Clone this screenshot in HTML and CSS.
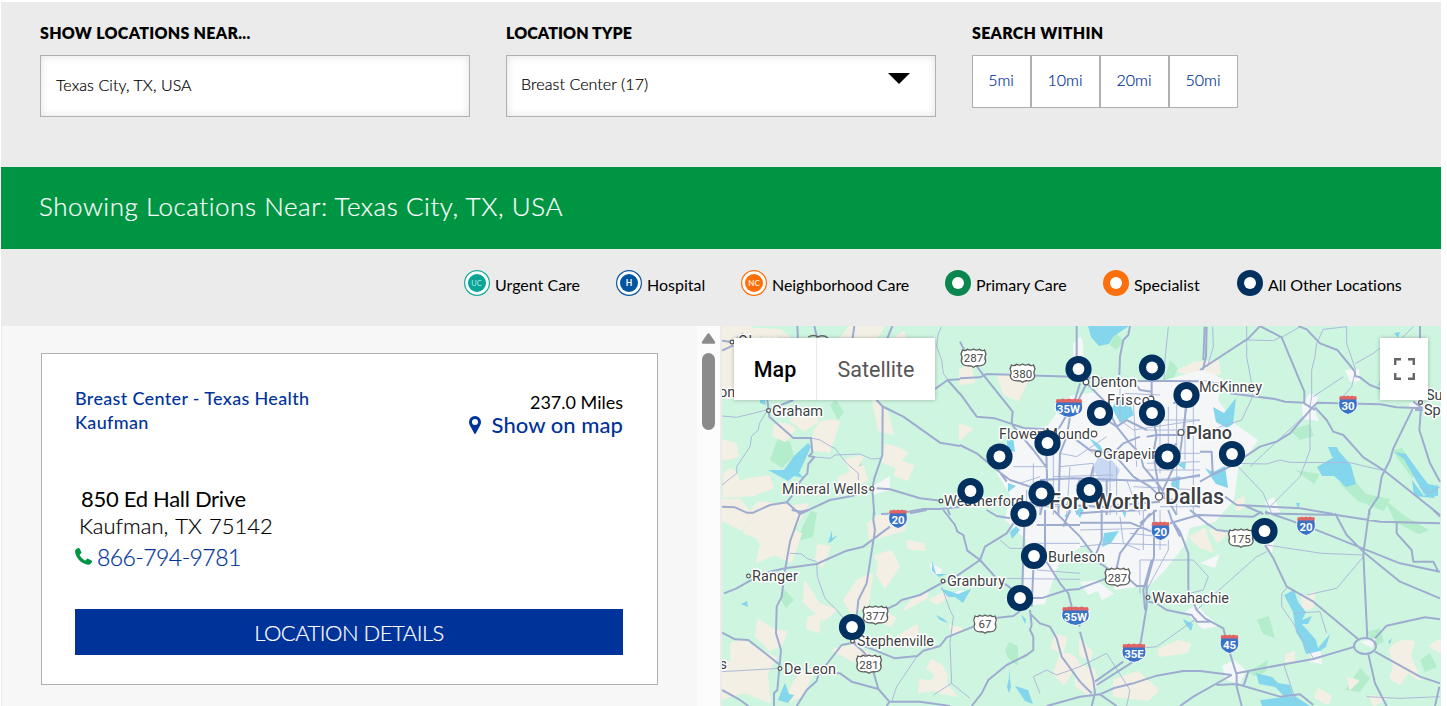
FILE: index.html
```html
<!DOCTYPE html>
<html lang="en">
<head>
<meta charset="utf-8">
<title>Locations</title>
<link rel="stylesheet" href="styles.css">
</head>
<body>
<main class="page">
  <form class="filters">
    <div class="field">
      <label class="label label-near">SHOW LOCATIONS NEAR...</label>
      <div class="input near"><span>Texas City, TX, USA</span></div>
    </div>
    <div class="field">
      <label class="label label-type">LOCATION TYPE</label>
      <div class="input select"><span>Breast Center (17)</span>
        <svg class="caret" viewBox="0 0 22 11"><path d="M0 0H22L11 11Z"/></svg>
      </div>
    </div>
    <div class="field">
      <label class="label label-within">SEARCH WITHIN</label>
      <div class="radius"><a>5mi</a><a>10mi</a><a>20mi</a><a>50mi</a></div>
    </div>
  </form>
  <h1 class="banner"><span>Showing Locations Near: Texas City, TX, USA</span></h1>
  <ul class="legend">
    <li><svg viewBox="0 0 26 26"><circle cx="13" cy="13" r="12.4" fill="#fff" stroke="#16a99d" stroke-width="1.2"/><circle cx="13" cy="13" r="9" fill="#08a598"/><text x="12.4" y="15.6" fill="#b9e9e3" font-size="7.5" text-anchor="middle">UC</text></svg><span>Urgent Care</span></li>
    <li><svg viewBox="0 0 26 26"><circle cx="13" cy="13" r="12.4" fill="#fff" stroke="#0b559f" stroke-width="1.2"/><circle cx="13" cy="13" r="9" fill="#0055a0"/><text x="13" y="16" fill="#fff" font-size="8.5" font-weight="700" text-anchor="middle">H</text></svg><span>Hospital</span></li>
    <li><svg viewBox="0 0 26 26"><circle cx="13" cy="13" r="12.4" fill="#fff" stroke="#ff6f08" stroke-width="1.2"/><circle cx="13" cy="13" r="9" fill="#ff6f08"/><text x="13" y="15.8" fill="#ffe9d8" font-size="8" font-weight="700" text-anchor="middle">NC</text></svg><span>Neighborhood Care</span></li>
    <li><svg viewBox="0 0 26 26"><circle cx="13" cy="13" r="13" fill="#0a8650"/><circle cx="13" cy="13" r="6" fill="#fff"/></svg><span>Primary Care</span></li>
    <li><svg viewBox="0 0 26 26"><circle cx="13" cy="13" r="13" fill="#fb700c"/><circle cx="13" cy="13" r="6" fill="#fff"/></svg><span>Specialist</span></li>
    <li><svg viewBox="0 0 26 26"><circle cx="13" cy="13" r="13" fill="#02315f"/><circle cx="13" cy="13" r="6" fill="#fff"/></svg><span>All Other Locations</span></li>
  </ul>
  <section class="results">
    <div class="list">
      <article class="card">
        <div class="card-head">
          <h2 class="name">Breast Center - Texas Health<br>Kaufman</h2>
          <div class="distance">
            <div class="miles">237.0 Miles</div>
            <a class="show"><svg viewBox="0 0 12 18"><path fill-rule="evenodd" d="M6 0a6 6 0 0 1 6 6c0 2-1 3.600-1.800 5L6.700 17.500q-.7 1-1.400 0L1.800 11C1 9.600 0 8 0 6a6 6 0 0 1 6-6Zm0 3a3 3 0 1 0 0 6a3 3 0 0 0 0-6Z"/></svg><span>Show on map</span></a>
          </div>
        </div>
        <div class="street">850 Ed Hall Drive</div>
        <div class="city">Kaufman, TX 75142</div>
        <a class="phone"><svg viewBox="0 0 17 17"><path d="M0 3.600C0 1.500 2 .2 3.800 0q.5 0 .8.600L6.400 4.300q.2.600-.3 1L4.800 6.600q-.3.400 0 .9 1.800 3.200 5 4.900.5.200.9-.2l1.300-1.400q.5-.4 1.100-.1l3.400 1.800q.6.300.5 1C16.800 15.400 15 17 12.800 16.800C6 15.500 1 10.500 0 3.600Z"/></svg><span>866-794-9781</span></a>
        <a class="details"><span>LOCATION DETAILS</span></a>
      </article>
    </div>
    <div class="scroll"><svg viewBox="0 0 14 11"><path d="M6 .7q1-1 2 0l5.500 8q.8 1.800-1 2H1.500q-1.800-.2-1-2Z"/></svg><i></i></div>
    <div class="map">
      <svg class="tiles" viewBox="722 326 719 380">
        <defs>
          <g id="pin"><circle r="13.100" fill="#02315f"/><circle r="5.900" fill="#fff"/></g>
          <g id="us"><path d="M-11-8q3 1.500 5-.8Q-3-7 0-9 3-7 6-8.800q2 2.300 5 .8l1.500 4q-2 3.500-.3 7-.5 5-7.200 4.800Q2 7.500 0 9.200-2 7.500-5 7.800-11.700 8-12.200 3q1.700-3.500-.3-7Z" fill="#fff" stroke="#5e5e5e" stroke-width="1.300"/></g>
          <g id="is"><path d="M-8.500-6.500q-2 8 1 11.500Q-4 8.500 0 9.500 4 8.500 7.500 5q3-3.500 1-11.500Z" fill="#3973c8" stroke="#fff" stroke-width=".8"/><path d="M-9-5.500-8.200-9q2 .9 4-.5Q-2-8 0-9.500 2-8 4.200-9.500q2 1.400 4 .5L9-5.500Z" fill="#e06464"/></g>
        </defs>
        <rect x="722" y="326" width="719" height="380" fill="#cef5e0"/>
        <g class="woods">
          <path d="M770 460l8-22 12 4 4 14-12 12ZM838 420l-8-15 6-5 8 12ZM852 462l6-4 5 9-6 5ZM803 525l8-14 6 2-4 24-15 4ZM781 600l2-12 11 12-8 8ZM1170 360l8 8-6 14h-8ZM1290 430l20-6 4 12-14 4ZM1392 450l10-2 16 24-6 6ZM1257 620l12-4 6 22-12-4ZM1345 690l15-22 10 10-10 14ZM1368 632l12-4 4 14-10 4ZM1295 470l25 4-6 10ZM1340 484l14-4 12 14 24 5-6 12-26-10ZM1385 500l20 16 24 14-10 4-24-12ZM1140 530l12-10 4 14-12 9ZM1060 540l15-10-4 16-12 4ZM1005 650l4-8 9 4v20l-10-8ZM1420 660l10-7 7 14-12 5ZM1110 345l6-13 8 10-8 8ZM1248 672l20-12-2 12-12 4Z"/>
        </g>
        <g class="dry">
          <path d="M722 326h28l8 12-20 60h-16ZM722 440l14 4 2 12-16 4ZM724 475q8-14 15 6l20 2-5 12-30 2ZM775 425q10-4 20 4l-10 12-12-6ZM815 430q8-14 24-8l-10 30-18-3ZM790 420l24-8 4 10-14 8ZM873 400l14 12 6 22-14-4ZM885 445q14 2 22 8l-12 14-12-5ZM838 478l25-12 4 14-23 8ZM845 460l18-4-10 18ZM745 480l24-4 4 12-24 7ZM898 460l15 6-6 14-12-5ZM722 500h18l12 16-10 14-20-10ZM748 515l10-13 36 4 14-2-12 22-35 18-7-10ZM740 328l40 2 10 8-40 2ZM850 326h34l-8 12h-35ZM892 340l12-8 3 18-10 12Z"/>
          <path d="M752 520q24-10 24 4l25 10-10 28-16-8-18 8 5-22-18-8ZM875 556l16-5 8 16-14 20-8-12 2-12ZM858 580l14-6-4 30-16 10-8-14ZM818 545l12 2-8 20-6-8ZM805 582l14 22 17 6-12 10-20-18ZM808 618l12-4-1 18-12-4ZM868 524l10-8 28 2-2 12-34 10ZM908 541l15 3 2 6-17-2ZM930 600l15-8 8 2-16 10ZM912 600l16-8-2 6-22 12ZM895 638l22-13 1 10-23 12ZM885 612l10 6-4 8-10-4ZM932 660l10 6 5 10-4 18-12-8 4-12-8-6ZM920 680l26 4 10 12-22-6-15 2ZM790 690q12-24 24-20l-12 26-15 6ZM758 620l16 10 12 2-4 12-12 6-14-14ZM731 644q12-8 20 2l25 12-10 16-14-4-20 2ZM722 660l16 5 28 2 4 35-25-10-23 6ZM950 626l12 3-8 6ZM833 650l20-5 22 12-6 8-20-6ZM1010 595l10-5-4 14-10-5ZM1056 635l10 3-3 14-12-4ZM1060 655q12-4 18 7l-14 22-10-10Z"/>
          <path d="M1010 374l22-2-14 28-14-6-6-18ZM960 370l10-6 4 18-14 2ZM960 425l12 4-12 10ZM1178 371l16-8 24-2 2 12-18 5ZM1235 502l8-5 2 10-8 3ZM1190 537l14-8 8 22-12-4ZM1210 530l16 4-8 8ZM1158 650l20-9 12 3-3 8-27 4ZM1114 680l24-8 20 18-10 10-34-4ZM1076 664l18 6 4 14-10 10-12-8ZM1080 640l12 12-2 8-10-5ZM1390 650q6-12 24-8l-4 14 10 24-12-8-8 12-10-6 4-12ZM1315 697l4-8 12 7-3 8ZM1348 678l10 3-8 8ZM1302 597l12-4-1 14-10 3ZM1370 696l16 2-12 8ZM1286 655l8-3v8l-8 2ZM1430 646l10-6v12Z"/>
        </g>
        <g class="urban">
          <path d="M1015 430 1047 426 1070 396 1095 392 1103 380 1165 380 1202 370 1222 378 1218 400 1235 424 1258 440 1238 470 1234 500 1215 522 1190 528 1185 545 1165 570 1150 585 1115 590 1105 560 1085 545 1060 560 1045 604 1022 606 1026 540 1005 520 1010 495 995 470Z"/>
          <path d="M1073 345q8-15 10-2l1 24-10-6ZM1302 405l8-12 8 4-4 12 5 12-16-2ZM1265 502l9-5 6 15-10 4ZM870 488l20-12 0 14-18 5ZM1345 370l14-1 1 12-10 1ZM1408 404l14-6 2 10-12 3ZM1080 582l16-2 18 14-12 6-4-9-10 4ZM1185 612l12-8 8 10 14 12-16 3ZM1360 642l16-4-4 10ZM1310 654l10-8 2 18-12-2ZM1222 666l12-6 12 10-6 14-14-4ZM930 563l12 6-2 8-9-5ZM960 590l8 2-2 7-12-6ZM852 640l4-7 6 8-12 6ZM1262 544l12-3-2 12ZM1200 563l20-9-5 14Z"/>
          <path fill="#c9d9f3" d="M1098 458l12 0 10 12-5 12h-14l-9-14Z"/>
        </g>
        <g class="water">
          <path d="M1088 326h41l-15 10-5 8-10 2-8-9ZM808 443l3 4-12 26 5 5-10-2-6 5-20-11 16 0 10-14ZM1112 408l6-10 12 5 4 12-14 8ZM1213 407l11 6 12-15-3 26-6 4-11-6ZM1317 467l17-10-5-10 8 2 14 16 5 19-10 3-12-11-12 0ZM1328 447l9 0 4 10-9 0ZM1205 468l8 4 12-6 3 22-12-4ZM1394 452l12 2 10 14 12 16 10 2v10l-14-2-15-26-5-9ZM1412 480l12 16 14-12-4 14-20-2ZM828 543l4-13 0 8 6-3-7 7ZM741 604l6-3 1 6ZM932 561l4 13 11 0-8 3-7-6ZM940 588l18 6 13-5-8 14-8-6-7 0ZM936 615l8 4 4 4-8-3ZM1010 532l6-6 4 4-8 9ZM781 692l4-9 4 11 5 1-6 8-10-3ZM1021 615l5 4-1 5ZM1284 595l10-5 4 12 8 10-4 8 10-4-4 8-6 0 14 16 2 8 12-14-4 13-6 4-14 3-4-12-6-10-3-20ZM1256 673l16 4 6 6 12 2 3 10-10 0-8-8-16-3ZM1260 700l35-4 15 10h-48ZM1007 440l6-4 2 16-8-2ZM1104 533l15-2-8 12-9 4ZM1088 437l12 8 6 12-10-10ZM1008 483l8 3-8 6ZM1183 619l10 5-2 7-5-6ZM1388 642l4-4-2 6ZM1015 686l13 4 5 14-8-3ZM1064 516l8-5-5 7ZM1122 511l5-2-2 9ZM1394 333l6-1-2 6ZM1010 668l-1 10-2 9 2 6 2-6-1-9ZM1080 518l-6-8 12-4ZM760 395l4 0 2 10-6-2ZM1296 503l4 0-2 6ZM1185 470l-8-6 9-2ZM1172 478l8-2-1 14-8-3ZM1378 386l6-15 7 2-7 10Z"/>
        </g>
        <g class="minor">
          <g transform="translate(720 320) scale(.33333)"><path d="M6 288 50 292 140 270M140 275 118 310 115 330 95 348 90 380 50 440 50 460 6 495M273 354 300 360 330 378 345 385 380 430 415 460V480M283 411 330 415 345 405 420 402 455 417 485 415M665 20 655 40 650 80 665 120 670 160 683 180"/></g>
          <g transform="translate(960 320) scale(.33333)"><path d="M625 20 615 120 612 180M300 440 400 430M300 400 350 410 440 350M330 350 360 370 400 400M480 200V300L520 330 720 300M490 220 600 225M520 240 530 440M600 280V460M625 260V420M650 250V585M675 240V420M700 220V585M540 300H720M560 330H720M560 400H720M560 430 720 425M560 450H720M500 480 540 585M450 420V585M470 440V585M560 480 720 470M400 430V480M200 510V585M220 430V585M240 540V585M280 400V585M330 440 320 585M350 540V585M200 560H500M160 440 260 440M280 470 460 465M520 500 720 510M600 560H720M180 490 240 470"/></g>
          <g transform="translate(1200 320) scale(.33333)"><path d="M140 18V110L155 190 158 230 125 300 0 340M245 52 300 20M140 60 220 62 245 50M350 70 345 110 335 150 335 230 330 260V390L300 470 240 530 210 560M350 70 370 28 440 20V70L467 150M467 130 520 100 545 80M600 60 640 20M463 165 455 200 425 235M340 230 430 170M100 430 200 432 240 420 270 427 450 428 500 440 553 452M115 440 190 520 215 580M150 440 310 290M38 20 40 80 22 140M0 180 60 190M660 500 690 520 720 500"/></g>
          <g transform="translate(720 510) scale(.33333)"><path d="M210 130 245 132 260 145 290 155M290 160 292 200 315 265 350 300 375 330M592 438 550 500 530 530 515 575M665 230 690 300 700 320 690 400 695 520 640 555M695 520 750 565M6 485 180 475M830 205 1080 208M840 90 870 115 920 115M940 500 980 480 1010 495 1080 470M940 500 960 550M940 100H1080M950 180 1080 190"/></g>
          <g transform="translate(1080 510) scale(.33333)"><path d="M560 105 725 130 850 135M560 125 530 140 350 300M850 140 770 235 680 255M350 325 230 410 180 415M620 235 605 250V290L640 340 700 445M610 460 650 580M180 150 340 150 385 200 370 240 330 250M180 150V250M265 90V120L200 240M0 470 80 430 150 540 140 588M640 310 720 305 740 370M0 110 90 100 260 105M120 20 130 100 180 120M150 70 240 80M190 0V120M240 0V120M0 60 200 55M860 560 960 565 1080 560"/></g>
        </g>
        <g class="major">
          <g transform="translate(720 320) scale(.33333)"><path d="M6 62 36 66 70 40M6 92 40 76M232 18 234 60M283 18 293 60M403 18 397 60M517 18 500 60M142 240 148 290 220 354H273L277 398 267 408 283 411 265 432 262 460 240 485 230 510 200 547 150 555 100 578H80L45 562 6 560M200 547 240 582 330 540 400 527 457 505 463 475 487 405 488 260 470 240M485 258 550 290 660 368 720 378M457 505 463 585M470 505 510 508 600 535 663 542M220 240 150 268M645 207 683 180 720 178M683 180 720 222M483 582 540 580 610 567 660 567 720 560M680 560 690 585"/></g>
          <g transform="translate(960 320) scale(.33333)"><path d="M0 175 60 172 80 162 340 170 520 182 720 184M0 65 10 85 70 165 158 275 155 310 165 325M0 220 50 290 105 295 195 325 260 327M0 375 50 400 110 450 150 480 240 510M350 18V150M360 190 345 240 300 320 258 370 262 500M380 190 355 240 330 290 320 350 300 400 295 585M380 190 430 240 470 320 510 370 540 400 550 440 600 500 650 585M510 18 505 45 490 60 480 110 478 165M575 180V280L590 345 580 400 600 530M640 250 710 220M560 350 590 345 670 345M165 325 220 390 262 445M350 360 390 390 460 400 490 370 540 350M240 480 340 475 540 482 640 480 720 465M460 400 520 470 570 500 600 530M400 440 385 500M262 500 240 585M100 430 140 485M0 545 80 540 240 550 420 560 600 545M600 530 720 560M440 300 470 320 500 300 560 330M520 182 540 210 575 215M690 180 660 400 600 530M620 400 650 370M440 480V585M0 500 30 510M360 480 350 500"/></g>
          <g transform="translate(1200 320) scale(.33333)"><path d="M20 20 18 110 8 150M14 20 10 120M180 18 145 55 0 150M180 18 245 52 313 215V250L345 270M295 18 320 28 360 70 412 90 465 155V168L480 172 510 195 545 208M660 18V60M90 220 225 237 255 245 313 248M0 485 35 465 90 440 135 410 180 380 230 365 270 340 300 305 340 260 352 248 540 253 590 262 668 265M345 262 380 300 400 335 430 345 490 412 553 452 720 585M640 262 580 385 570 420 545 470 535 530 508 570V585M663 265 658 330 690 430 720 485M75 530 110 555 300 565 400 582M130 555 190 582M0 395H35L38 460M640 245 668 265M645 270H668"/></g>
          <g transform="translate(720 510) scale(.33333)"><path d="M215 0 242 5 265 0M242 5 210 95 195 180 185 260 170 290 168 370 183 420 172 540 162 550V588M12 250 50 235 85 215 150 185 195 175 290 162 380 122 430 110 470 80 510 50M570 10 620 0M462 0 460 30 465 60 440 220 415 270 410 320M670 0 705 45 712 65 730 75 742 122 780 150 825 200 880 240M880 40 860 70 795 110 780 150 700 205 660 222 600 255 545 270 530 283 500 297M400 398 365 405 295 495 290 513 260 540 230 588M400 395 525 445 592 438 610 422 660 408 680 382 760 350M820 325 880 318 905 300M400 398 430 425 450 450 475 537 508 575 600 575 690 588M508 575 500 588M6 368 45 388 85 390 130 425 180 465M290 490 360 490 395 515 475 537M6 540 60 570 85 588M930 300 935 345 930 360 940 380V420L920 435 860 465 805 510 785 550 755 588M913 50 905 290M940 180 935 290M920 265 970 263 1040 240 1080 237M930 310 960 340 990 350 1010 385 1025 440 1080 515 1115 550M1080 560 1010 580 980 588M980 155 1020 220 1045 250 1060 310 1080 350M975 0V150M800 0 830 18 870 25M950 45H1080M1000 0 1040 40 1080 80M1030 50 1050 0M975 140 940 110"/></g>
          <g transform="translate(1080 510) scale(.33333)"><path d="M222 0V140L200 220V290L185 380 180 410M215 150 190 240 195 300M160 455 50 525M130 455 45 515M0 365 40 510 45 550 35 588M0 560 60 553 110 588M60 553 100 535 160 520 230 497 310 483 360 483 455 495M265 0 275 30 300 65 325 130V240L350 300 375 325 430 355 435 375M205 275 230 280 260 300 300 308 335 315 350 335H390M450 430 470 495V530L485 588M455 495 340 560 300 588M470 490 520 480 600 465 700 447 825 410M410 525 470 522 600 560 660 553 700 585M490 530 505 485M0 38H150L215 65M0 10 60 5 200 0M270 40 355 15 520 20 545 5M330 0 380 40 410 60 455 65M555 5 650 38M705 58 960 160 1080 185M555 10 770 15 900 35 1080 40M765 10 800 75 855 130 960 215 1080 265M868 0 850 130 862 385M950 40V70L995 120 1000 155H1060L1075 185M555 105 580 145 620 230 700 275 835 388M885 385 920 347 1035 322 1080 328M885 425 1020 500 1080 520M865 433 885 520 920 588M1078 530 1065 588M0 235 80 205M150 210 170 228 200 228M0 80 60 160 90 180M210 10 120 130 110 175M65 0V90L45 140M1060 0 1080 20M180 40 230 0M280 40 300 80"/><ellipse cx="855" cy="408" rx="33" ry="24"/></g>
        </g>
        <g class="shields">
          <use href="#us" x="973.500" y="358"/><use href="#us" x="1022.500" y="373"/><use href="#us" x="875.500" y="615"/><use href="#us" transform="translate(985 624) scale(.9 1)"/><use href="#us" x="869" y="664"/><use href="#us" x="1117.500" y="577"/><use href="#us" x="1241" y="538"/>
          <use href="#is" x="1348" y="405"/><use href="#is" x="898" y="519"/><use href="#is" x="1160.500" y="531"/><use href="#is" x="1306" y="526"/><use href="#is" x="1229.500" y="644"/>
          <use href="#is" transform="translate(1069 408) scale(1.500 1)"/><use href="#is" transform="translate(1075.500 616) scale(1.500 1)"/><use href="#is" transform="translate(1134 653) scale(1.300 1)"/>
          <path d="M808 337q6-3 10 0 5-3 10 1" fill="none" stroke="#666" stroke-width="1.300"/>
          <g class="us-n"><text x="973.500" y="362.300">287</text><text x="1022.500" y="377.800">380</text><text x="875.500" y="619.800">377</text><text x="985" y="628.300">67</text><text x="869" y="668.500">281</text><text x="1117.500" y="581.500">287</text><text x="1241" y="542.500">175</text></g>
          <g class="is-n"><text x="1348" y="409.500">30</text><text x="898" y="524">20</text><text x="1160.500" y="535.500">20</text><text x="1306" y="530.500">20</text><text x="1229.500" y="648.500">45</text><text x="1068.500" y="412.500">35W</text><text x="1075.500" y="621">35W</text><text x="1134" y="657.500">35E</text></g>
        </g>
        <g class="towns">
          <circle cx="732" cy="342" r="1.900"/><circle cx="768.500" cy="410.500" r="1.900"/><circle cx="872" cy="488.500" r="1.900"/><circle cx="941" cy="501" r="1.900"/><circle cx="748.500" cy="576" r="1.900"/><circle cx="943" cy="581" r="1.900"/><circle cx="780" cy="668.500" r="1.900"/><circle cx="852.500" cy="641" r="1.900"/><circle cx="1148" cy="597.500" r="1.900"/><circle cx="1420.500" cy="402.500" r="1.900"/><circle cx="1086" cy="382" r="2.800"/><circle cx="1151" cy="399" r="2.800"/><circle cx="1094" cy="434" r="2.800"/><circle cx="1098" cy="454" r="2.800"/><circle cx="1181" cy="432.500" r="3"/><circle cx="1159" cy="496.500" r="3.600"/>
        </g>
        <g class="labels">
          <text x="738" y="346" textLength="38">Olney</text><text x="719" y="397">on</text><text x="772" y="415.500" textLength="51">Graham</text><text x="782" y="493.500" textLength="86">Mineral Wells</text><text x="944" y="506" textLength="80">Weatherford</text><text x="752" y="581" textLength="46">Ranger</text><text x="947" y="586" textLength="58">Granbury</text><text x="857" y="645.500" textLength="77">Stephenville</text><text x="784" y="673.500" textLength="52">De Leon</text><text x="719.500" y="669">s</text><text x="1091" y="387" textLength="46">Denton</text><text x="1107" y="404.500" textLength="43">Frisco</text><text x="1199" y="391.500" textLength="63">McKinney</text><text x="999" y="439" textLength="91">Flower Mound</text><text x="1103" y="459" textLength="64">Grapevine</text><text x="1048" y="562" textLength="57">Burleson</text><text x="1152" y="602.500" textLength="77">Waxahachie</text><text x="1426" y="400">Su</text><text x="1424" y="414.500">Sp</text>
          <text class="mid" x="1186" y="438.500" textLength="46">Plano</text><text class="big" x="1049" y="509" textLength="102">Fort Worth</text><text class="big" x="1165" y="504" textLength="59">Dallas</text>
        </g>
        <use href="#pin" x="1078.500" y="369"/><use href="#pin" x="1152" y="367.500"/><use href="#pin" x="1186.500" y="395"/><use href="#pin" x="1100" y="413"/><use href="#pin" x="1152" y="413"/><use href="#pin" x="1047.500" y="443"/><use href="#pin" x="999.500" y="456.500"/><use href="#pin" x="1167.500" y="456.500"/><use href="#pin" x="1232" y="454"/><use href="#pin" x="970.500" y="491"/><use href="#pin" x="1041.500" y="493.500"/><use href="#pin" x="1089.500" y="490"/><use href="#pin" x="1023.500" y="514"/><use href="#pin" x="1264.500" y="531"/><use href="#pin" x="1034" y="556"/><use href="#pin" x="1020" y="598"/><use href="#pin" x="852" y="627"/>
      </svg>
      <div class="types"><button class="on">Map</button><button>Satellite</button></div>
      <button class="full"><svg viewBox="0 0 21 22"><path d="M1.200 7V1.200H7M14 1.200H19.800V7M19.800 15V20.800H14M7 20.800H1.200V15"/></svg></button>
    </div>
  </section>
</main>
</body>
</html>
```

FILE: styles.css
```css
* { box-sizing: border-box; }
body { margin: 0; background: #fff; color: #000; font-family: Lato, "Open Sans", sans-serif; overflow: hidden; }
.page { margin: 2px 6px 0 1px; width: 1440px; height: 704px; background: #ebebeb; overflow: hidden; }
.filters { display: flex; gap: 36px; height: 165px; padding: 21px 39px 0; }
.label { display: block; font-size: 16px; font-weight: 800; line-height: 20px; margin-bottom: 12px; white-space: nowrap; }
.label-near { letter-spacing: .28px; }
.label-type { letter-spacing: .08px; }
.label-within { letter-spacing: .27px; }
.input, .radius, .banner, .city, .phone, .details { -webkit-text-stroke: .2px currentColor; }
.input { display: flex; align-items: center; width: 430px; height: 62px; padding: 0 15px; background: #fff; border: 1px solid #b0b0b0; box-shadow: inset 0 0 8px #e2e2e2; font-size: 16px; font-weight: 300; letter-spacing: .08px; }
.near { padding-bottom: 3px; }
.select { justify-content: space-between; align-items: flex-start; padding: 16px 25px 0 14px; line-height: 24px; }
.caret { width: 22px; height: 11px; margin-top: 1px; }
.radius { display: flex; font-size: 16px; font-weight: 300; color: #039; }
.radius a { width: 69px; height: 53px; padding: 0 1px 4px 0; border: 1px solid #b0b0b0; background: #fff; display: flex; align-items: center; justify-content: center; }
.radius a:first-child { width: 59px; }
.banner { display: flex; align-items: center; margin: 0; height: 82px; padding: 0 0 4px 38px; background: #009543; color: #fff; font-size: 26px; font-weight: 300; letter-spacing: .55px; }
.legend { display: grid; grid-template-columns: 152px 125px 204px 158px 134px 1fr; margin: 0; padding: 21px 0 0 463px; height: 77px; list-style: none; font-size: 16px; line-height: 30px; }
.legend li { display: flex; gap: 5px; white-space: nowrap; }
.legend li:nth-child(3), .legend li:nth-child(6) { letter-spacing: -.05px; }
.legend svg { width: 26px; height: 26px; font-family: Lato, sans-serif; letter-spacing: 0; }
.results { display: grid; grid-template-columns: 696px 23px 721px; height: 380px; }
.list { background: #f7f7f7; padding: 27px 39px 0; border-left: 1px solid #ebebeb; }
.card { width: 617px; height: 332px; border: 1px solid #b0b0b0; background: #fff; padding: 32px 34px 0 33px; }
.card-head { display: flex; justify-content: space-between; height: 99px; }
.name { margin: 0; color: #039; font-size: 18px; font-weight: 500; line-height: 24px; letter-spacing: .33px; }
.distance { display: flex; flex-direction: column; align-items: flex-end; padding-top: 5px; font-size: 18px; line-height: 23px; }
.show { display: flex; align-items: center; gap: 11px; font-size: 22px; font-weight: 500; color: #039; line-height: 22px; letter-spacing: .05px; }
.show svg { width: 12px; height: 18px; fill: #039; }
.street { height: 27px; line-height: 27px; font-size: 22px; padding-left: 6px; letter-spacing: -.3px; }
.city { height: 27px; line-height: 27px; font-size: 22px; font-weight: 300; padding-left: 4px; word-spacing: 1.5px; }
.phone { display: flex; align-items: center; gap: 5px; height: 35px; font-size: 23px; font-weight: 300; color: #039; letter-spacing: -.56px; }
.phone svg { width: 17px; height: 17px; fill: #009543; }
.details { display: flex; align-items: center; justify-content: center; margin-top: 35px; height: 46px; background: #039; color: #fff; font-size: 22px; font-weight: 300; letter-spacing: -.5px; }
.scroll { background: #fcfcfc; display: flex; flex-direction: column; align-items: center; padding-top: 7px; gap: 9px; }
.scroll svg { width: 15px; height: 11px; fill: #8b8b8b; }
.scroll i { width: 13px; height: 77px; border-radius: 7px; background: #8b8b8b; }
.map { position: relative; padding-left: 1px; }
.map .tiles { display: block; width: 719px; height: 380px; margin-left: 1px; font-family: Roboto, sans-serif; }
.types { position: absolute; left: 14px; top: 12px; display: flex; gap: 1px; box-shadow: 0 0 4px #0004; background: #e8e8e8; }
.types button { width: 118px; height: 62px; border: 0; background: #fff; color: #565656; font: 400 21.500px Roboto, sans-serif; padding: 0; }
.types .on { width: 82px; color: #000; font-weight: 500; }
.full { position: absolute; left: 660px; top: 12px; width: 48px; height: 62px; border: 0; padding: 0; background: #fff; box-shadow: 0 0 4px #0004; display: flex; align-items: center; justify-content: center; }
.full svg { width: 21px; height: 22px; fill: none; stroke: #666; stroke-width: 2.400; }
.woods { fill: #b3edcb; }
.dry { fill: #f4efe4; stroke: #f4efe4; stroke-width: 2; stroke-linejoin: round; }
.urban { fill: #f5f6f8; }
.water { fill: #83d6ec; }
.minor path { fill: none; stroke: #adbadb; stroke-width: 3; stroke-linejoin: round; }
.major path, .major ellipse { fill: none; stroke: #9eacd0; stroke-width: 6; stroke-linejoin: round; }
.us-n { font-size: 11.500px; fill: #444; text-anchor: middle; }
.is-n { font-size: 11.500px; font-weight: 700; fill: #fff; text-anchor: middle; }
.towns { fill: #fff; stroke: #555; stroke-width: 1.200; }
.labels { font-size: 14.500px; fill: #3c4043; stroke: #fff; stroke-width: 3px; stroke-linejoin: round; paint-order: stroke; }
.labels .mid { font-size: 18px; font-weight: 500; }
.labels .big { font-size: 21.500px; font-weight: 500; }
```
